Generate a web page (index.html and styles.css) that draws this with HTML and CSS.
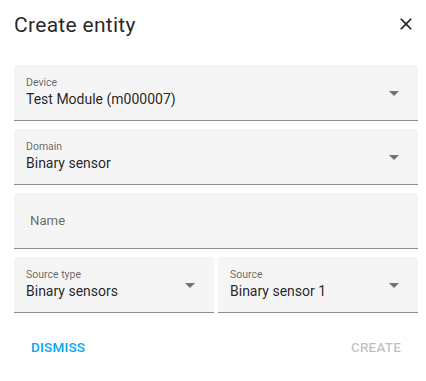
FILE: index.html
```html
<!DOCTYPE html>
<html lang="en">
<head>
<meta charset="utf-8">
<title>Create entity</title>
<link rel="stylesheet" href="styles.css">
</head>
<body>
<div class="dialog">
  <div class="header">
    <h2 class="title">Create entity</h2>
    <button class="close" aria-label="Close">
      <svg viewBox="0 0 24 24" width="20" height="20"><path fill="currentColor" d="M19,6.41L17.59,5L12,10.59L6.41,5L5,6.41L10.59,12L5,17.59L6.41,19L12,13.41L17.59,19L19,17.59L13.41,12L19,6.41Z"/></svg>
    </button>
  </div>
  <div class="fields">
    <div class="field select">
      <div class="text">
        <div class="label">Device</div>
        <div class="value">Test Module (m000007)</div>
      </div>
      <span class="arrow"></span>
    </div>
    <div class="field select">
      <div class="text">
        <div class="label">Domain</div>
        <div class="value">Binary sensor</div>
      </div>
      <span class="arrow"></span>
    </div>
    <div class="field input">
      <span class="placeholder">Name</span>
    </div>
    <div class="row">
      <div class="field select">
        <div class="text">
          <div class="label">Source type</div>
          <div class="value">Binary sensors</div>
        </div>
        <span class="arrow"></span>
      </div>
      <div class="field select">
        <div class="text">
          <div class="label">Source</div>
          <div class="value">Binary sensor 1</div>
        </div>
        <span class="arrow"></span>
      </div>
    </div>
  </div>
  <div class="actions">
    <button class="btn primary">Dismiss</button>
    <button class="btn disabled">Create</button>
  </div>
</div>
</body>
</html>
```
FILE: styles.css
```css
* { box-sizing: border-box; }
html, body {
  margin: 0;
  background: #ffffff;
}
body {
  font-family: Roboto, "Liberation Sans", sans-serif;
  color: rgba(0, 0, 0, 0.87);
}
.dialog {
  width: 426px;
  padding: 13px 8px 0 14px;
}
.header {
  display: flex;
  justify-content: space-between;
  align-items: flex-start;
  height: 24px;
}
.title {
  margin: 0;
  font-size: 21px;
  line-height: 24px;
  font-weight: 400;
  letter-spacing: 0.3px;
  color: rgba(0, 0, 0, 0.87);
}
.close {
  display: block;
  margin: 0.5px 2px 0 0;
  padding: 0;
  border: 0;
  background: none;
  width: 20px;
  height: 20px;
  color: #212121;
}
.close svg { display: block; }
.fields {
  margin-top: 28px;
  display: flex;
  flex-direction: column;
  gap: 8px;
}
.row {
  display: grid;
  grid-template-columns: 1fr 1fr;
  gap: 4px;
}
.field {
  height: 56px;
  background: #f5f5f5;
  border-bottom: 1px solid rgba(0, 0, 0, 0.42);
  border-radius: 4px 4px 0 0;
  display: flex;
  align-items: center;
}
.select {
  padding: 0 19px 0 12px;
}
.text {
  flex: 1;
  align-self: flex-start;
  padding-top: 12px;
  white-space: nowrap;
  overflow: hidden;
}
.label {
  font-size: 10.5px;
  line-height: 12px;
  color: rgba(0, 0, 0, 0.6);
}
.value {
  font-size: 14px;
  line-height: 21px;
  color: rgba(0, 0, 0, 0.87);
}
.arrow {
  width: 0;
  height: 0;
  border-left: 5px solid transparent;
  border-right: 5px solid transparent;
  border-top: 5px solid rgba(0, 0, 0, 0.54);
  margin-top: 1px;
}
.input {
  padding: 0 16px;
}
.placeholder {
  font-size: 13.2px;
  margin-top: -1px;
  color: rgba(0, 0, 0, 0.6);
}
.actions {
  display: flex;
  justify-content: space-between;
  padding: 0 9px;
  margin-top: 16px;
}
.btn {
  height: 36px;
  line-height: 36px;
  padding: 0 8px;
  border: 0;
  background: none;
  font-family: Roboto, "Liberation Sans", sans-serif;
  font-size: 13.5px;
  font-weight: 500;
  letter-spacing: 0.2px;
  text-transform: uppercase;
}
.primary { color: #03a9f4; }
.disabled { color: rgba(0, 0, 0, 0.26); }
```
